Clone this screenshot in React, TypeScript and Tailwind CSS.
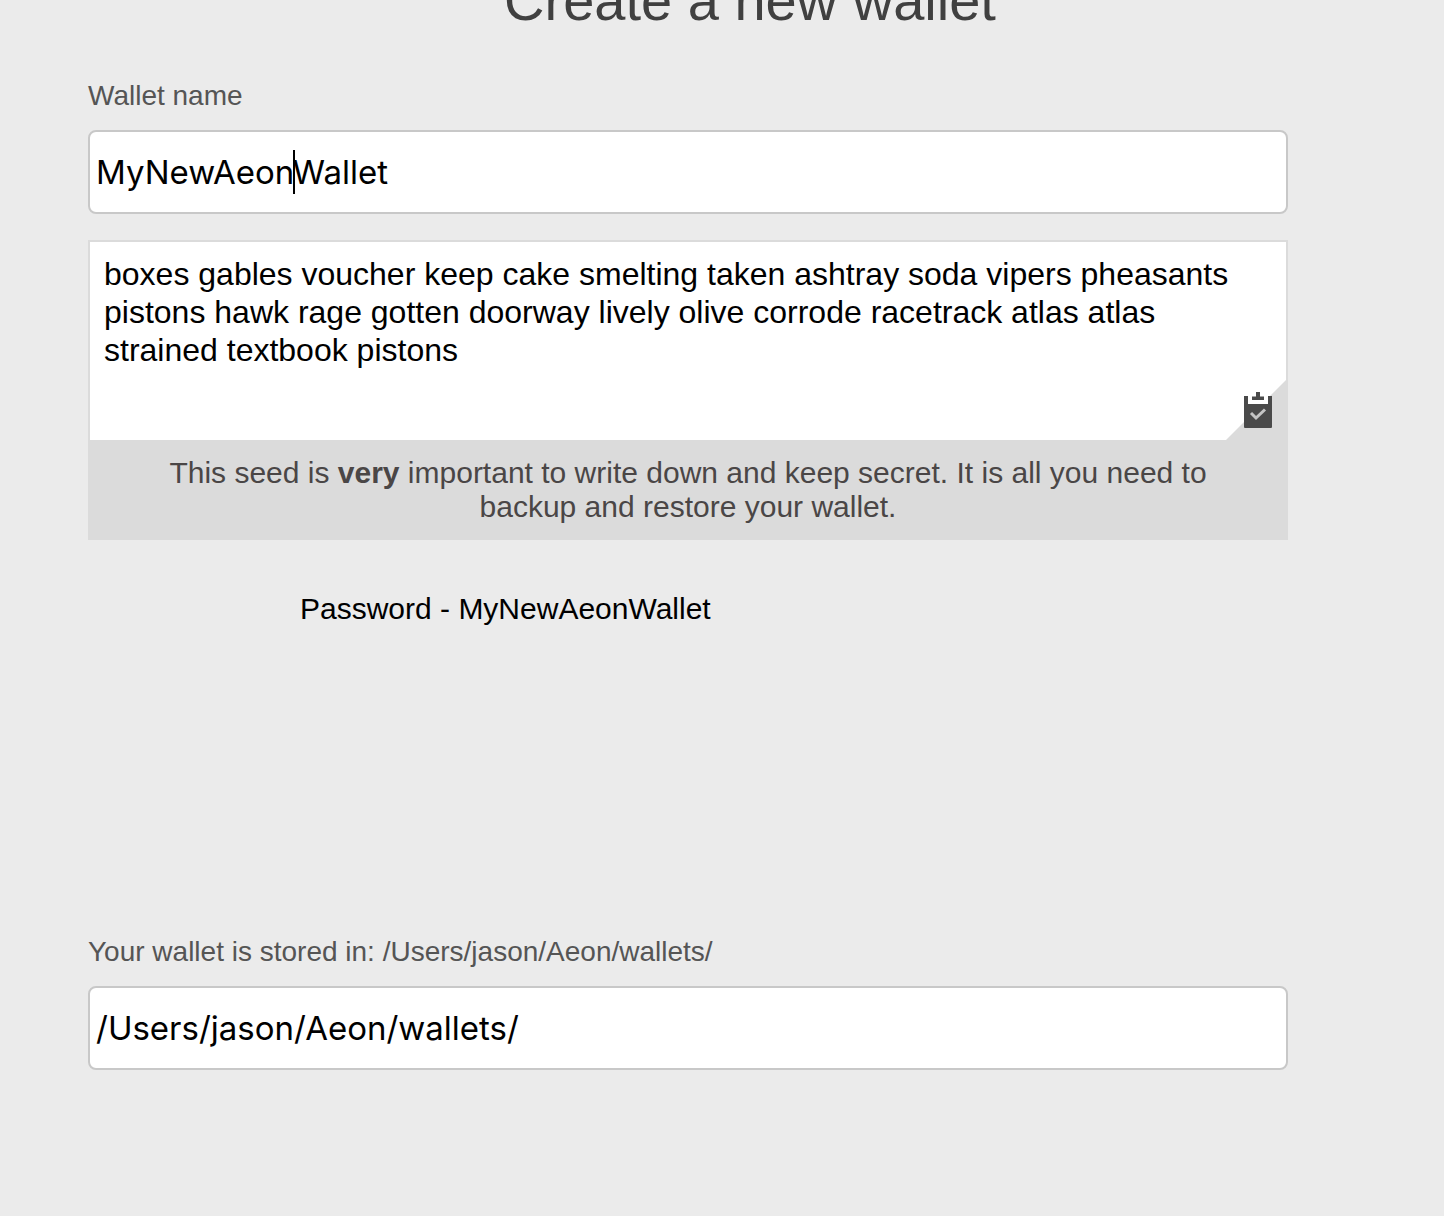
import { useState } from "react";

const SEED =
  "boxes gables voucher keep cake smelting taken ashtray soda vipers pheasants pistons hawk rage gotten doorway lively olive corrode racetrack atlas atlas strained textbook pistons";

const fieldClass =
  "block h-[84px] w-full rounded-lg border-2 border-[#c8c8c8] bg-white px-1.5 font-['Inter',sans-serif] text-[33px] text-black outline-none";

function ClipboardIcon() {
  return (
    <svg viewBox="0 0 28 36" className="block h-9 w-7" aria-hidden="true">
      <path d="M0 4H4V12H24V4H28V35Q28 36 27 36H1Q0 36 0 35Z" fill="#4a4a4a" />
      <path d="M4 4H10V0H18V4H24V12H4Z" fill="#ffffff" />
      <path d="M12 0H16V4.5H20V8H8V4.5H12Z" fill="#4a4a4a" />
      <path d="M7 21L12 26L21 17.5" fill="none" stroke="#c4c4c4" strokeWidth="3" />
    </svg>
  );
}

export default function App() {
  const [name, setName] = useState("MyNewAeonWallet");
  const [path, setPath] = useState("/Users/jason/Aeon/wallets/");

  return (
    <div className="min-h-screen overflow-hidden bg-[#ebebeb] font-['Liberation_Sans',Arial,sans-serif]">
      <header className="-mt-[31px] pl-14 text-center">
        <h1 className="text-[56px] leading-16 text-[#404040]">Create a new wallet</h1>
      </header>

      <main className="pt-[47px] pr-[156px] pb-16 pl-[88px]">
        <label htmlFor="wallet-name" className="block text-[28px] leading-8 text-[#555555]">
          Wallet name
        </label>
        <div className="relative mt-[18px]">
          <input
            id="wallet-name"
            type="text"
            value={name}
            onChange={(e) => setName(e.target.value)}
            className={fieldClass}
          />
          <span className="pointer-events-none absolute top-5 left-[205px] h-11 w-0.5 bg-black" />
        </div>

        <section className="mt-[26px] bg-[#dbdbdb]">
          <div className="relative">
            <textarea
              aria-label="Wallet seed"
              readOnly
              value={SEED}
              className="block h-[200px] w-full resize-none border-2 border-b-0 border-[#dbdbdb] bg-white px-3.5 py-[13px] text-[32px] leading-[38px] text-black outline-none"
            />
            <svg viewBox="0 0 62 62" className="absolute right-0 bottom-0 size-[62px]" aria-hidden="true">
              <path d="M62 0V62H0Z" fill="#dbdbdb" />
            </svg>
            <button type="button" aria-label="Copy seed" className="absolute right-4 bottom-3">
              <ClipboardIcon />
            </button>
          </div>
          <p className="px-16 py-4 text-center text-[30px] leading-[34px] text-[#4a4646]">
            This seed is <b>very</b> important to write down and keep secret. It is all you need to backup and restore
            your wallet.
          </p>
        </section>

        <p className="mt-[51px] ml-[212px] text-[30px] leading-9 text-black">Password - MyNewAeonWallet</p>

        <label htmlFor="wallet-path" className="mt-[309px] block text-[28px] leading-8 text-[#555555]">
          Your wallet is stored in: /Users/jason/Aeon/wallets/
        </label>
        <input
          id="wallet-path"
          type="text"
          value={path}
          onChange={(e) => setPath(e.target.value)}
          className={"mt-[18px] " + fieldClass}
        />
      </main>
    </div>
  );
}
